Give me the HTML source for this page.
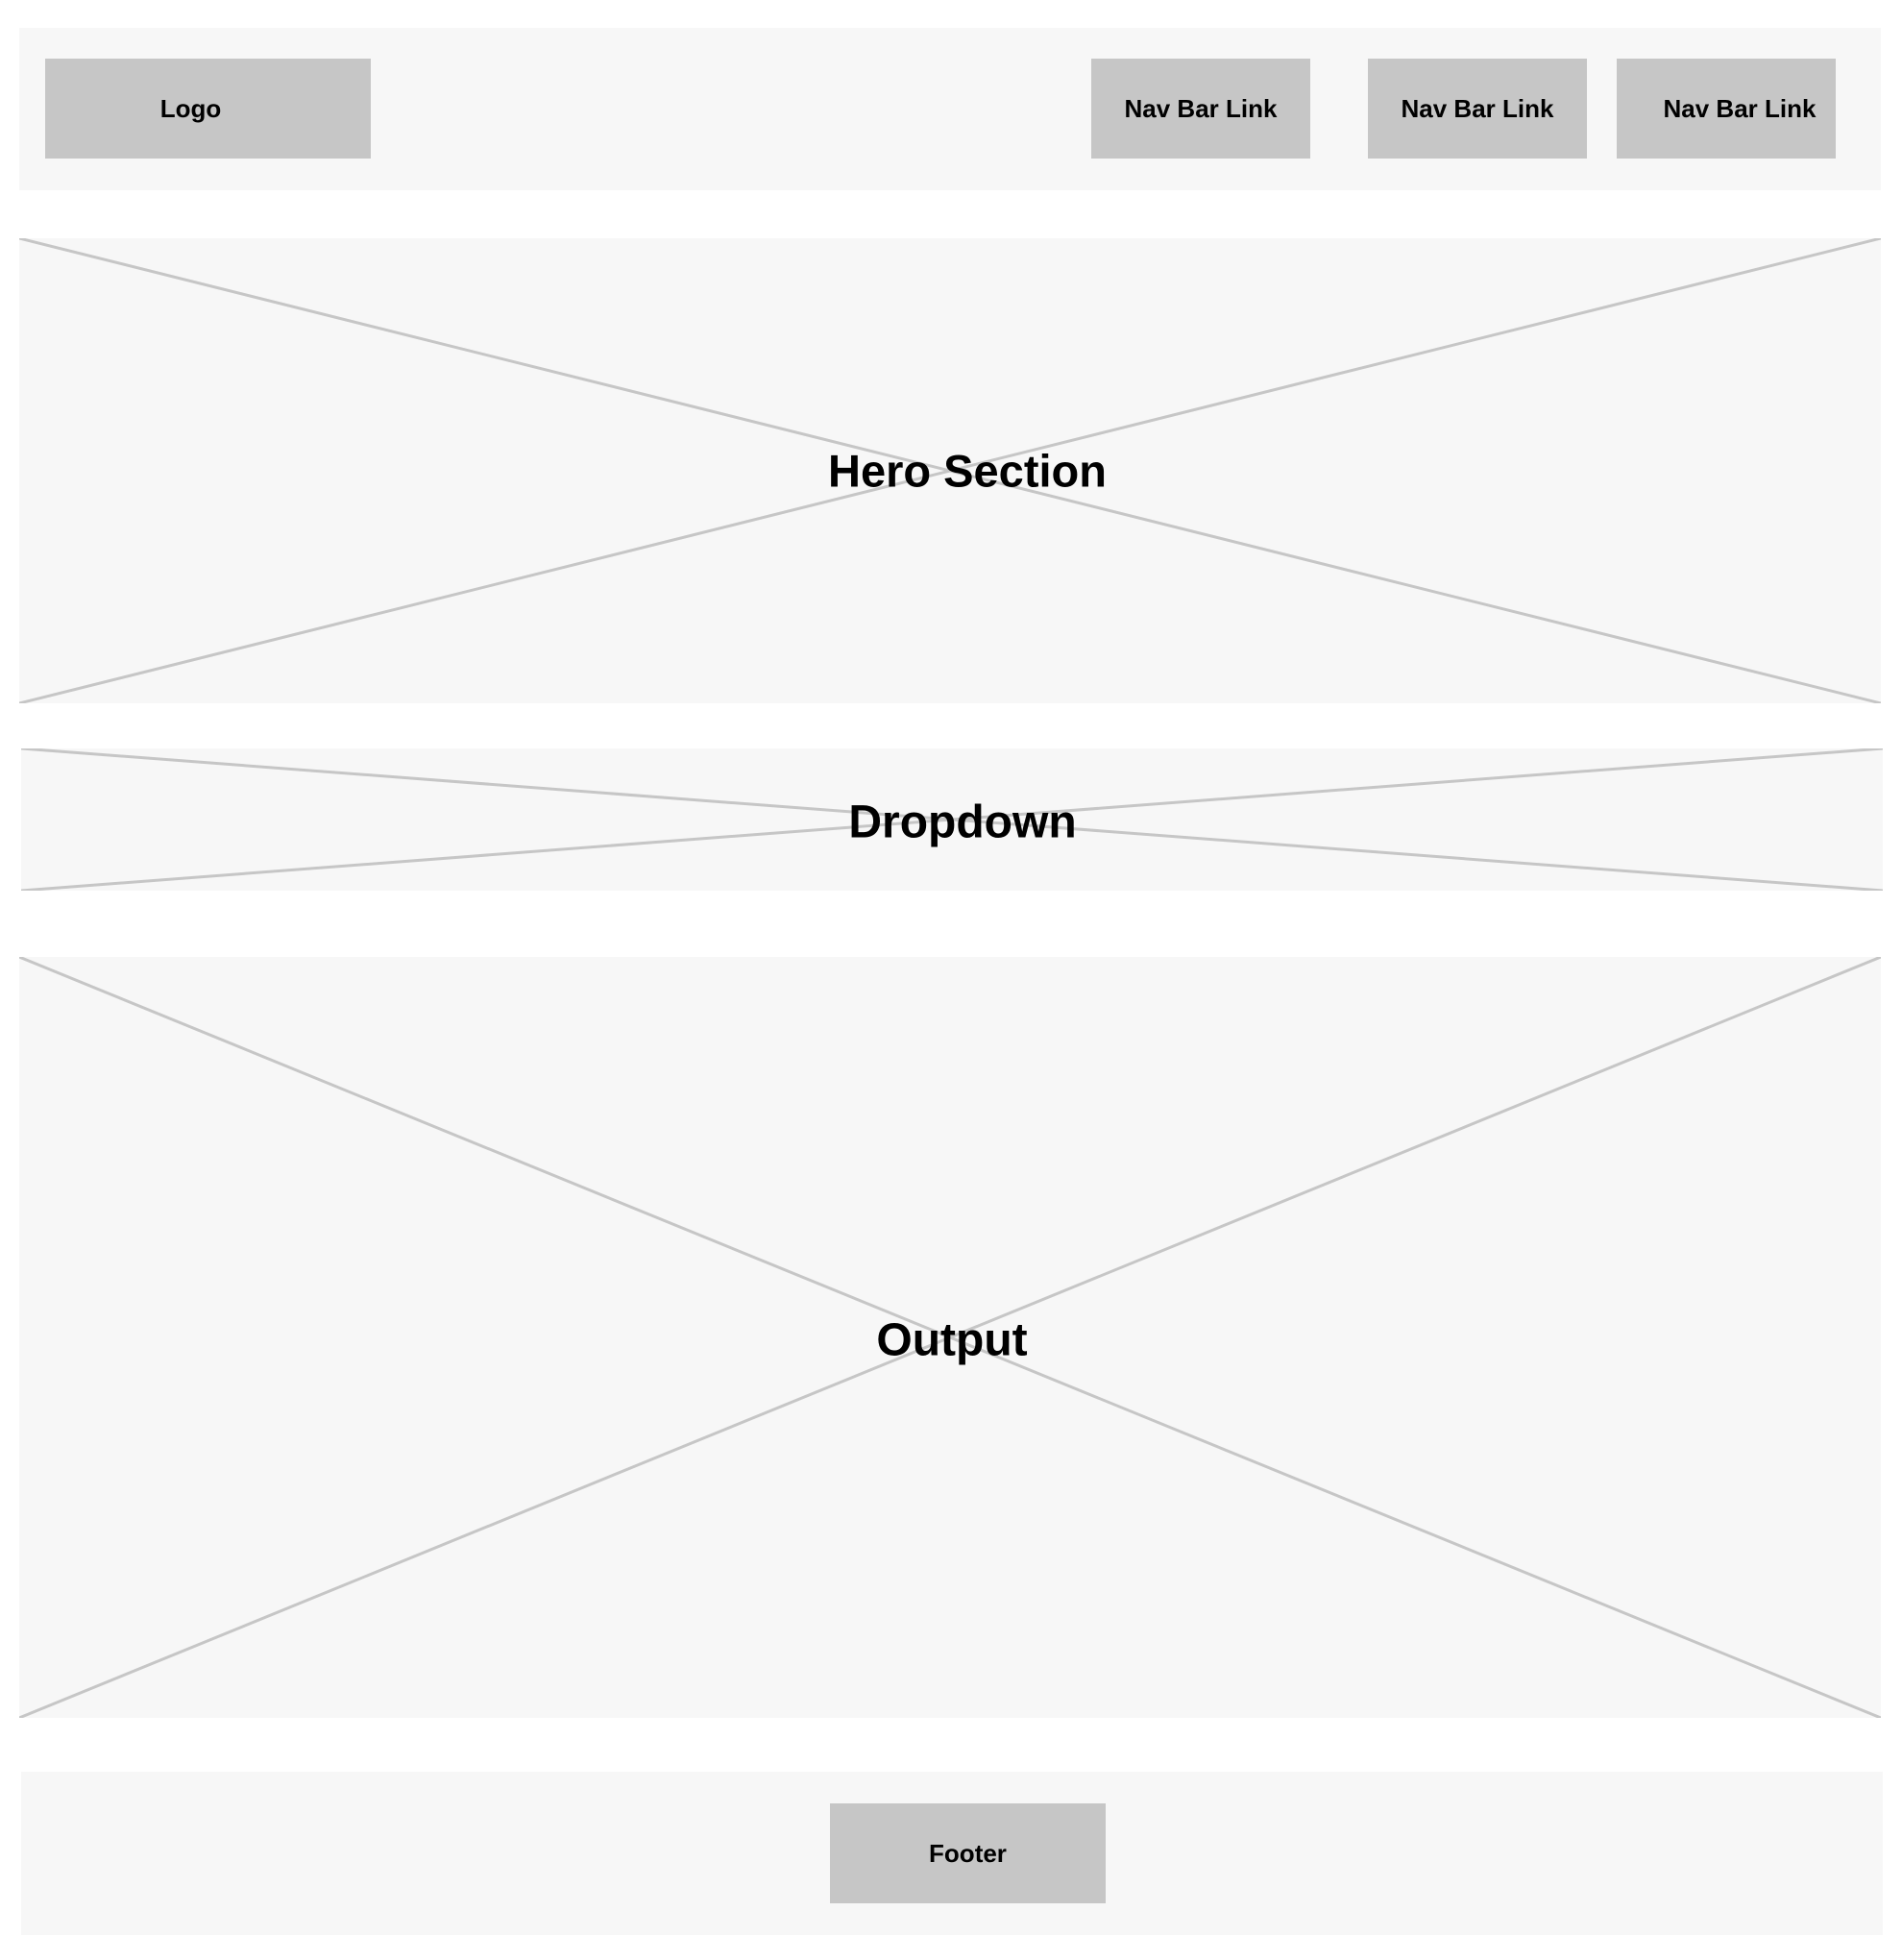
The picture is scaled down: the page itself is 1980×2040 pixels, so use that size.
<!DOCTYPE html>
<html><head><meta charset="utf-8"><style>
body{margin:0;width:1980px;height:2040px;background:#fff;position:relative;font-family:"Liberation Sans",sans-serif;font-weight:bold;color:#000;overflow:hidden}
.b{position:absolute;background:#f7f7f7}
.g{position:absolute;background:#c6c6c6;display:flex;align-items:center;justify-content:center;font-size:26px;box-sizing:border-box}
.b svg{position:absolute;left:0;top:0;width:100%;height:100%}
.t{position:absolute;transform:translate(-50%,-50%);font-size:47px;white-space:nowrap}
</style></head><body>
<div class="b" style="left:20px;top:29px;width:1938px;height:169px"></div>
<div class="g" style="left:47px;top:61px;width:339px;height:104px;padding-right:36px">Logo</div>
<div class="g" style="left:1136px;top:61px;width:228px;height:104px">Nav Bar Link</div>
<div class="g" style="left:1424px;top:61px;width:228px;height:104px">Nav Bar Link</div>
<div class="g" style="left:1683px;top:61px;width:228px;height:104px;padding-left:28px">Nav Bar Link</div>

<div class="b" style="left:20px;top:248px;width:1938px;height:484px"><svg viewBox="0 0 100 100" preserveAspectRatio="none"><path d="M0 0L100 100M0 100L100 0" stroke="#c6c6c6" stroke-width="3" vector-effect="non-scaling-stroke"/></svg></div>
<div class="t" style="left:1007px;top:490px">Hero Section</div>

<div class="b" style="left:22px;top:779px;width:1938px;height:148px"><svg viewBox="0 0 100 100" preserveAspectRatio="none"><path d="M0 0L100 100M0 100L100 0" stroke="#c6c6c6" stroke-width="3" vector-effect="non-scaling-stroke"/></svg></div>
<div class="t" style="left:1002px;top:856px;font-size:48px">Dropdown</div>

<div class="b" style="left:20px;top:996px;width:1938px;height:792px"><svg viewBox="0 0 100 100" preserveAspectRatio="none"><path d="M0 0L100 100M0 100L100 0" stroke="#c6c6c6" stroke-width="3" vector-effect="non-scaling-stroke"/></svg></div>
<div class="t" style="left:991px;top:1395px;font-size:48px">Output</div>

<div class="b" style="left:22px;top:1844px;width:1938px;height:170px"></div>
<div class="g" style="left:864px;top:1877px;width:287px;height:104px">Footer</div>
</body></html>
